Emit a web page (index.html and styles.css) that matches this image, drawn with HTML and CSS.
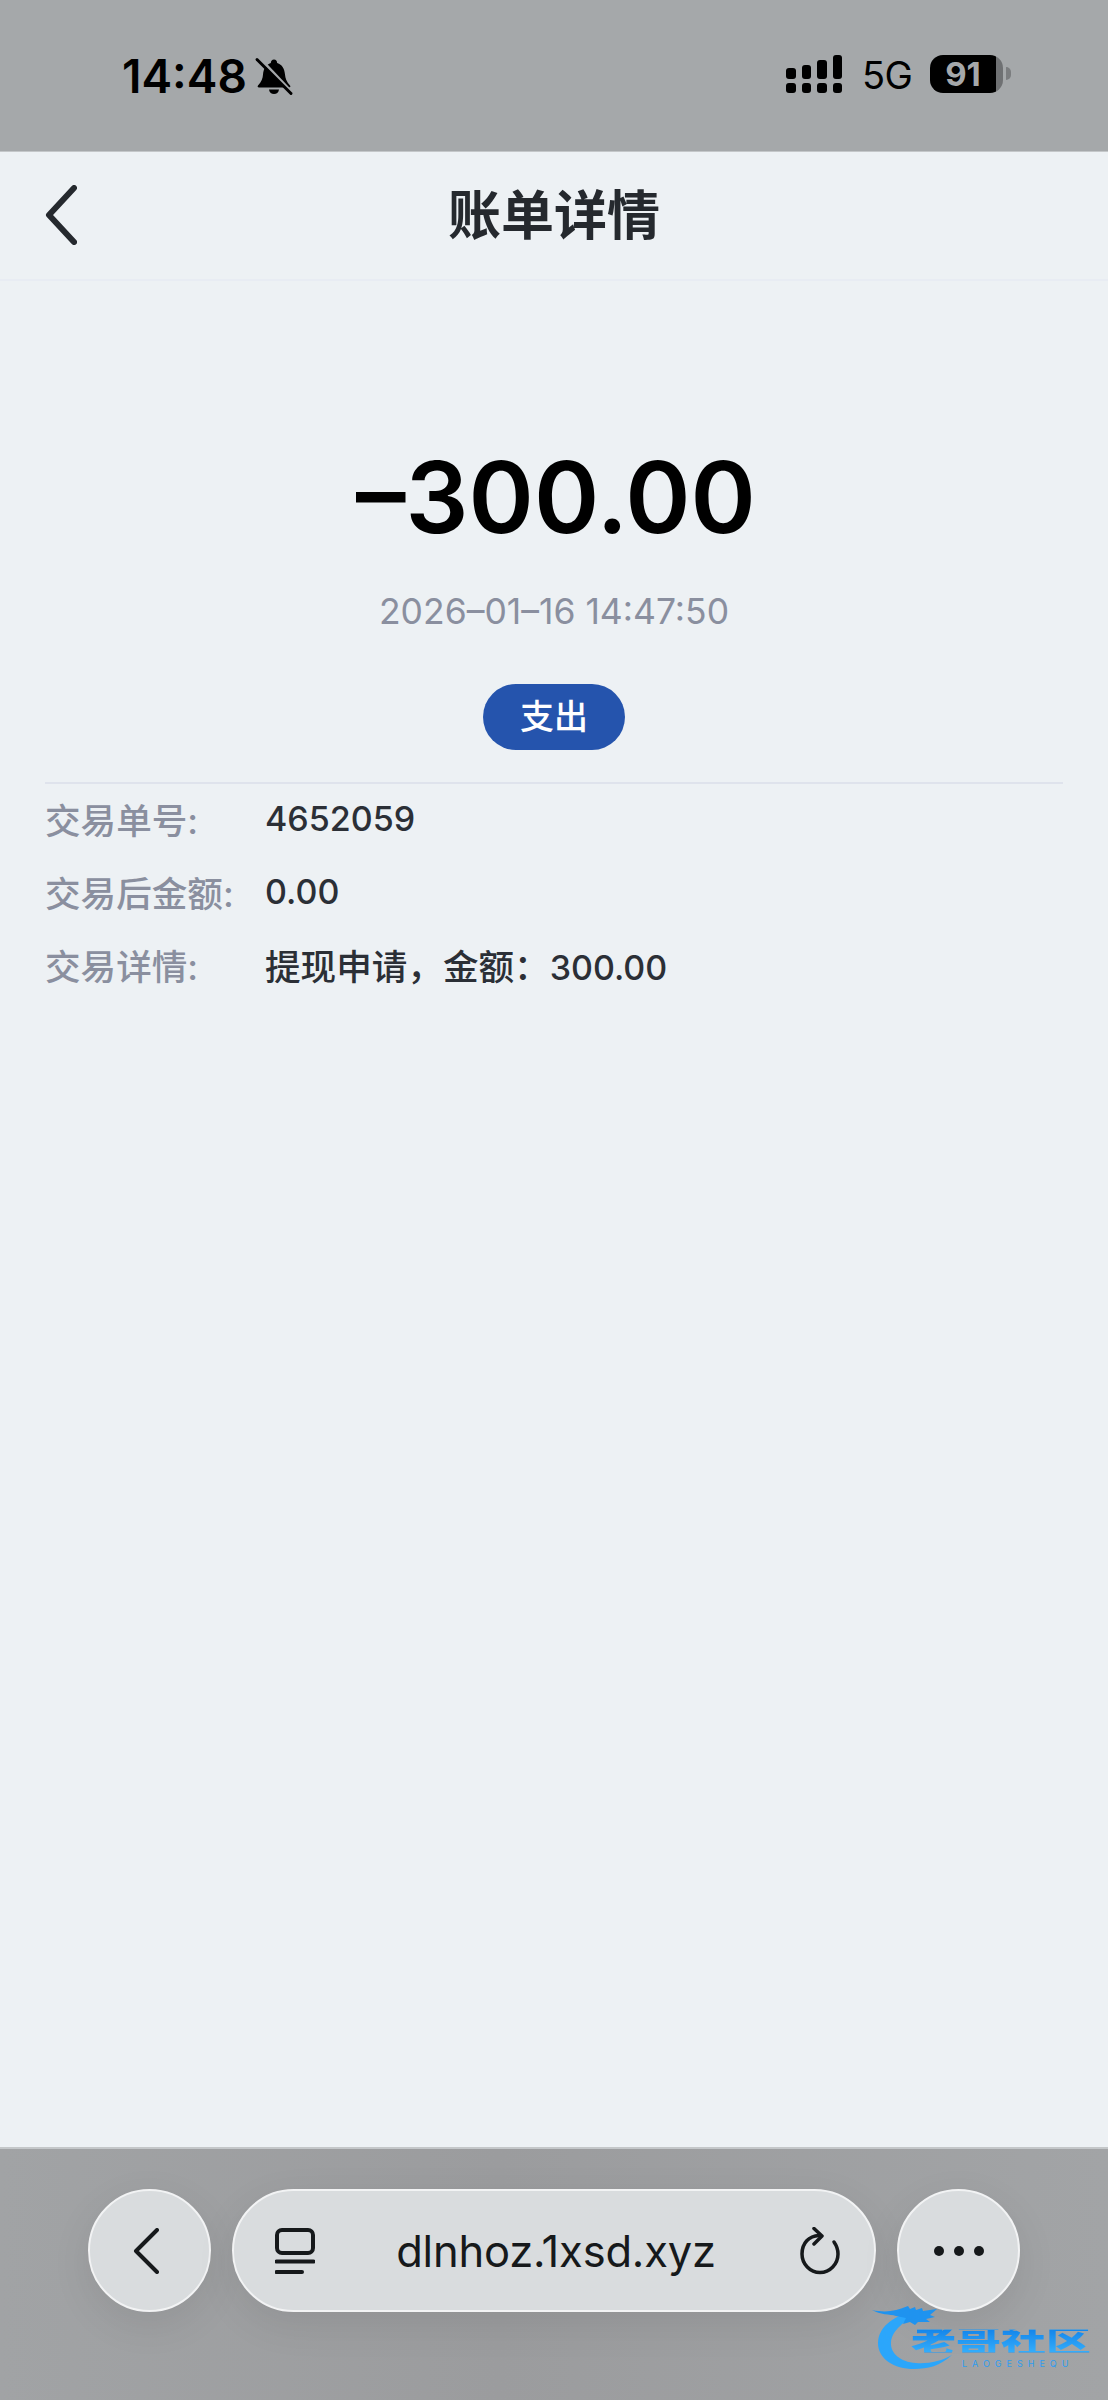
FILE: index.html
```html
<!DOCTYPE html>
<html lang="zh-CN">
<head>
    <meta charset="UTF-8">
    <meta name="viewport" content="width=device-width, initial-scale=1.0">
    <title>账单详情</title>
    <link rel="stylesheet" href="styles.css">
</head>
<body>
    <div class="status-bar">
        <div class="status-left">
            <span class="clock">14:48</span>
            <svg class="bell" viewBox="0 0 36 36">
                <path d="M18 1c2 0 3 1.500 3.200 3.500 5 1.500 7.300 6 7.800 11.500.3 4 1.500 7 5 11 .8 1 .2 2-1 2H3c-1.200 0-1.800-1-1-2 3.500-4 4.800-7 5-11 .5-5.500 3-10 7.800-11.500C15 2.500 16 1 18 1z"/>
                <path d="M13 31h10c-.4 3-2.400 4.500-5 4.500s-4.600-1.500-5-4.500z"/>
                <path class="bell-gap" d="M3 -1L37 35"/>
                <path class="bell-slash" d="M1 1L35 35"/>
            </svg>
        </div>
        <div class="status-right">
            <div class="signal">
                <div class="signal-col"><i class="bar-1"></i><i></i></div>
                <div class="signal-col"><i class="bar-2"></i><i></i></div>
                <div class="signal-col"><i class="bar-3"></i><i></i></div>
                <div class="signal-col"><i class="bar-4"></i><i></i></div>
            </div>
            <span class="network">5G</span>
            <div class="battery"><span class="battery-level">91</span></div>
            <div class="battery-nub"></div>
        </div>
    </div>

    <div class="nav-bar">
        <svg class="nav-back" viewBox="0 0 32 60"><path d="M29 3L4 30L29 57"/></svg>
        <h1 class="nav-title">账单详情</h1>
    </div>

    <main class="content">
        <div class="amount">–300.00</div>
        <div class="date">2026–01–16 14:47:50</div>
        <div class="badge">支出</div>
        <div class="details">
            <div class="detail-row"><span class="detail-label">交易单号:</span><span class="detail-value"><span class="num">4652059</span></span></div>
            <div class="detail-row"><span class="detail-label">交易后金额:</span><span class="detail-value"><span class="num">0.00</span></span></div>
            <div class="detail-row"><span class="detail-label">交易详情:</span><span class="detail-value">提现申请，金额：<span class="num">300.00</span></span></div>
        </div>
    </main>

    <div class="browser-bar">
        <div class="round-btn">
            <svg class="btn-back" viewBox="0 0 26 46"><path d="M24 2L3 23L24 44"/></svg>
        </div>
        <div class="url-pill">
            <svg class="tabs-icon" viewBox="0 0 40 46">
                <rect x="2" y="2" width="36" height="23" rx="5"/>
                <path d="M1.500 33.500H38.500"/>
                <path d="M1.500 44H27"/>
            </svg>
            <span class="url-text">dlnhoz.1xsd.xyz</span>
            <svg class="reload-icon" viewBox="0 0 40 48">
                <path d="M19 8.500C9 9 2 16 2 27c0 10 8 18.500 18 18.500S38 37 38 27c0-4.500-1.500-8.500-4-12"/>
                <path d="M14 1.500L22 9L14 17"/>
            </svg>
        </div>
        <div class="round-btn">
            <div class="dots"><i></i><i></i><i></i></div>
        </div>

        <div class="watermark">
            <svg class="dragon" viewBox="0 0 90 70">
                <path class="dragon-body" d="M42 6C18 12 6 24 6 38c0 16 16 26 36 26 14 0 26-3 38-14-10 6-24 9-36 8C28 57 18 48 19 37 20 26 32 15 48 9z"/>
                <path class="dragon-head" d="M0 5C14 8 24 6 36 1l2 3 5-2 1 3 6-2 1 3 14-2-7 6 5 2-9 2 4 3-12 0-3 3-5-3-7 2 3-6-10-2C18 9 8 10 0 5z"/>
            </svg>
            <span class="mark-name">老哥社区</span>
            <span class="mark-latin">LAOGESHEQU</span>
        </div>
    </div>
</body>
</html>
```

FILE: styles.css
```css
* { box-sizing: border-box; }
html, body { height: 100%; }
body {
    margin: 0;
    height: 2400px;
    display: flex;
    flex-direction: column;
    font-family: "Inter", "Noto Sans CJK SC", sans-serif;
    background-color: #edf1f4;
    color: #2b2f36;
    overflow: hidden;
}

/* status bar */
.status-bar {
    height: 152px;
    flex: none;
    background-color: #a5a8aa;
    border-bottom: 1px solid #c4c7c9;
    display: flex;
    justify-content: space-between;
    padding: 55px 97px 0 122px;
    color: #000;
}
.status-left {
    display: flex;
    align-items: flex-start;
    gap: 9px;
}
.clock {
    font-size: 46px;
    font-weight: 600;
    line-height: 42px;
}
.bell {
    width: 36px;
    height: 37px;
    margin-top: 3px;
    overflow: visible;
}
.bell path { fill: #000; }
.bell .bell-gap {
    fill: none;
    stroke: #a5a8aa;
    stroke-width: 3;
}
.bell .bell-slash {
    fill: none;
    stroke: #000;
    stroke-width: 3;
    stroke-linecap: round;
}
.status-right {
    display: flex;
    align-items: flex-start;
}
.signal {
    display: flex;
    gap: 6px;
    width: 56px;
    height: 38px;
    margin-right: 20px;
}
.signal-col {
    width: 10px;
    display: flex;
    flex-direction: column;
    justify-content: flex-end;
    gap: 4px;
}
.signal-col i {
    display: block;
    height: 10px;
    background-color: #000;
    border-radius: 3px;
}
.signal-col .bar-1 { height: 11px; }
.signal-col .bar-2 { height: 14px; }
.signal-col .bar-3 { height: 19px; }
.signal-col .bar-4 { height: 24px; }
.network {
    font-size: 38px;
    line-height: 38px;
    margin: 1px 20px 0 0;
    width: 48px;
    letter-spacing: -0.5px;
}
.battery {
    width: 73px;
    height: 38px;
    border-radius: 13px;
    background: linear-gradient(to right, #000 91%, #6f7173 91%);
    display: flex;
    justify-content: center;
    padding-right: 7px;
}
.battery-level {
    color: #a5a8aa;
    font-size: 33px;
    font-weight: 700;
    line-height: 38px;
}
.battery-nub {
    width: 5px;
    height: 13px;
    margin: 12px 0 0 3px;
    background-color: #7b7d7f;
    border-radius: 0 6px 6px 0;
}

/* nav */
.nav-bar {
    height: 129px;
    flex: none;
    display: flex;
    align-items: center;
    justify-content: center;
    position: relative;
    border-bottom: 2px solid #e8ecf3;
}
.nav-back {
    position: absolute;
    left: 45px;
    top: 33px;
    width: 32px;
    height: 60px;
    fill: none;
    stroke: #25292e;
    stroke-width: 6;
    stroke-linecap: round;
    stroke-linejoin: round;
}
.nav-title {
    margin: 0;
    font-size: 53px;
    font-weight: 700;
    line-height: 64px;
    color: #25292e;
}

/* content */
.content {
    flex: 1;
    padding-top: 166px;
    display: flex;
    flex-direction: column;
    align-items: center;
}
.amount {
    font-size: 99px;
    font-weight: 600;
    line-height: 100px;
    color: #000;
    margin-left: 4px;
}
.date {
    margin-top: 43px;
    font-size: 35.5px;
    line-height: 44px;
    color: #8a8f9f;
}
.badge {
    margin-top: 50px;
    width: 142px;
    height: 66px;
    border-radius: 33px;
    background-color: #2554ad;
    color: #fff;
    font-size: 34px;
    font-weight: 500;
    line-height: 66px;
    text-align: center;
}
.details {
    align-self: stretch;
    margin: 32px 45px 0;
    border-top: 2px solid #dfe3ec;
}
.detail-row {
    display: flex;
    height: 73px;
    align-items: center;
    font-size: 35.6px;
    font-weight: 500;
    position: relative;
    top: -2px;
}
.detail-label {
    width: 220px;
    color: #8a8f9f;
    flex: none;
}
.num { font-size: 34px; }

/* browser toolbar */
.browser-bar {
    height: 253px;
    flex: none;
    position: relative;
    background: linear-gradient(to right, #a1a3a5, #9b9c9e 45%, #a2a4a6);
    border-top: 2px solid #c4c7c9;
    display: flex;
    gap: 21px;
    padding: 40px 88px 0;
    align-items: flex-start;
}
.round-btn, .url-pill {
    height: 123px;
    background-color: #d9dcde;
    border: 2px solid #f2f3f4;
    box-shadow: 0 12px 40px rgba(0,0,0,0.08);
    display: flex;
    align-items: center;
    justify-content: center;
}
.round-btn {
    width: 123px;
    flex: none;
    border-radius: 50%;
}
.url-pill {
    flex: 1;
    border-radius: 62px;
    padding: 0 34px 0 41px;
    justify-content: space-between;
}
.btn-back {
    width: 26px;
    height: 46px;
    margin-right: 8px;
    fill: none;
    stroke: #16191b;
    stroke-width: 4;
    stroke-linecap: round;
    stroke-linejoin: round;
}
.tabs-icon {
    width: 40px;
    height: 46px;
    fill: none;
    stroke: #16191b;
    stroke-width: 4;
    stroke-linecap: round;
}
.url-text {
    font-size: 43.5px;
    color: #16191b;
    line-height: 60px;
    letter-spacing: -0.2px;
    margin-right: 3px;
}
.reload-icon {
    width: 40px;
    height: 48px;
    fill: none;
    stroke: #16191b;
    stroke-width: 3.500;
    stroke-linecap: round;
    stroke-linejoin: round;
}
.dots {
    display: flex;
    gap: 10px;
}
.dots i {
    width: 10px;
    height: 10px;
    border-radius: 50%;
    background-color: #16191b;
}

/* watermark over the toolbar */
.watermark {
    position: absolute;
    left: 872px;
    top: 156px;
    width: 222px;
    height: 70px;
}
.dragon {
    position: absolute;
    left: 0;
    top: 0;
    width: 90px;
    height: 70px;
}
.dragon-body { fill: #2ba6fb; }
.dragon-head { fill: #1f93ef; }
.mark-name {
    position: absolute;
    left: 39px;
    top: 20px;
    font-size: 45px;
    line-height: 32px;
    font-weight: 900;
    white-space: nowrap;
    transform: scaleY(0.72);
    background: linear-gradient(to bottom, #1485ea, #34aefc);
    -webkit-background-clip: text;
    background-clip: text;
    color: transparent;
}
.mark-latin {
    position: absolute;
    left: 90px;
    top: 54px;
    font-size: 9px;
    line-height: 10px;
    letter-spacing: 5px;
    color: #2f9df0;
    white-space: nowrap;
}
```
